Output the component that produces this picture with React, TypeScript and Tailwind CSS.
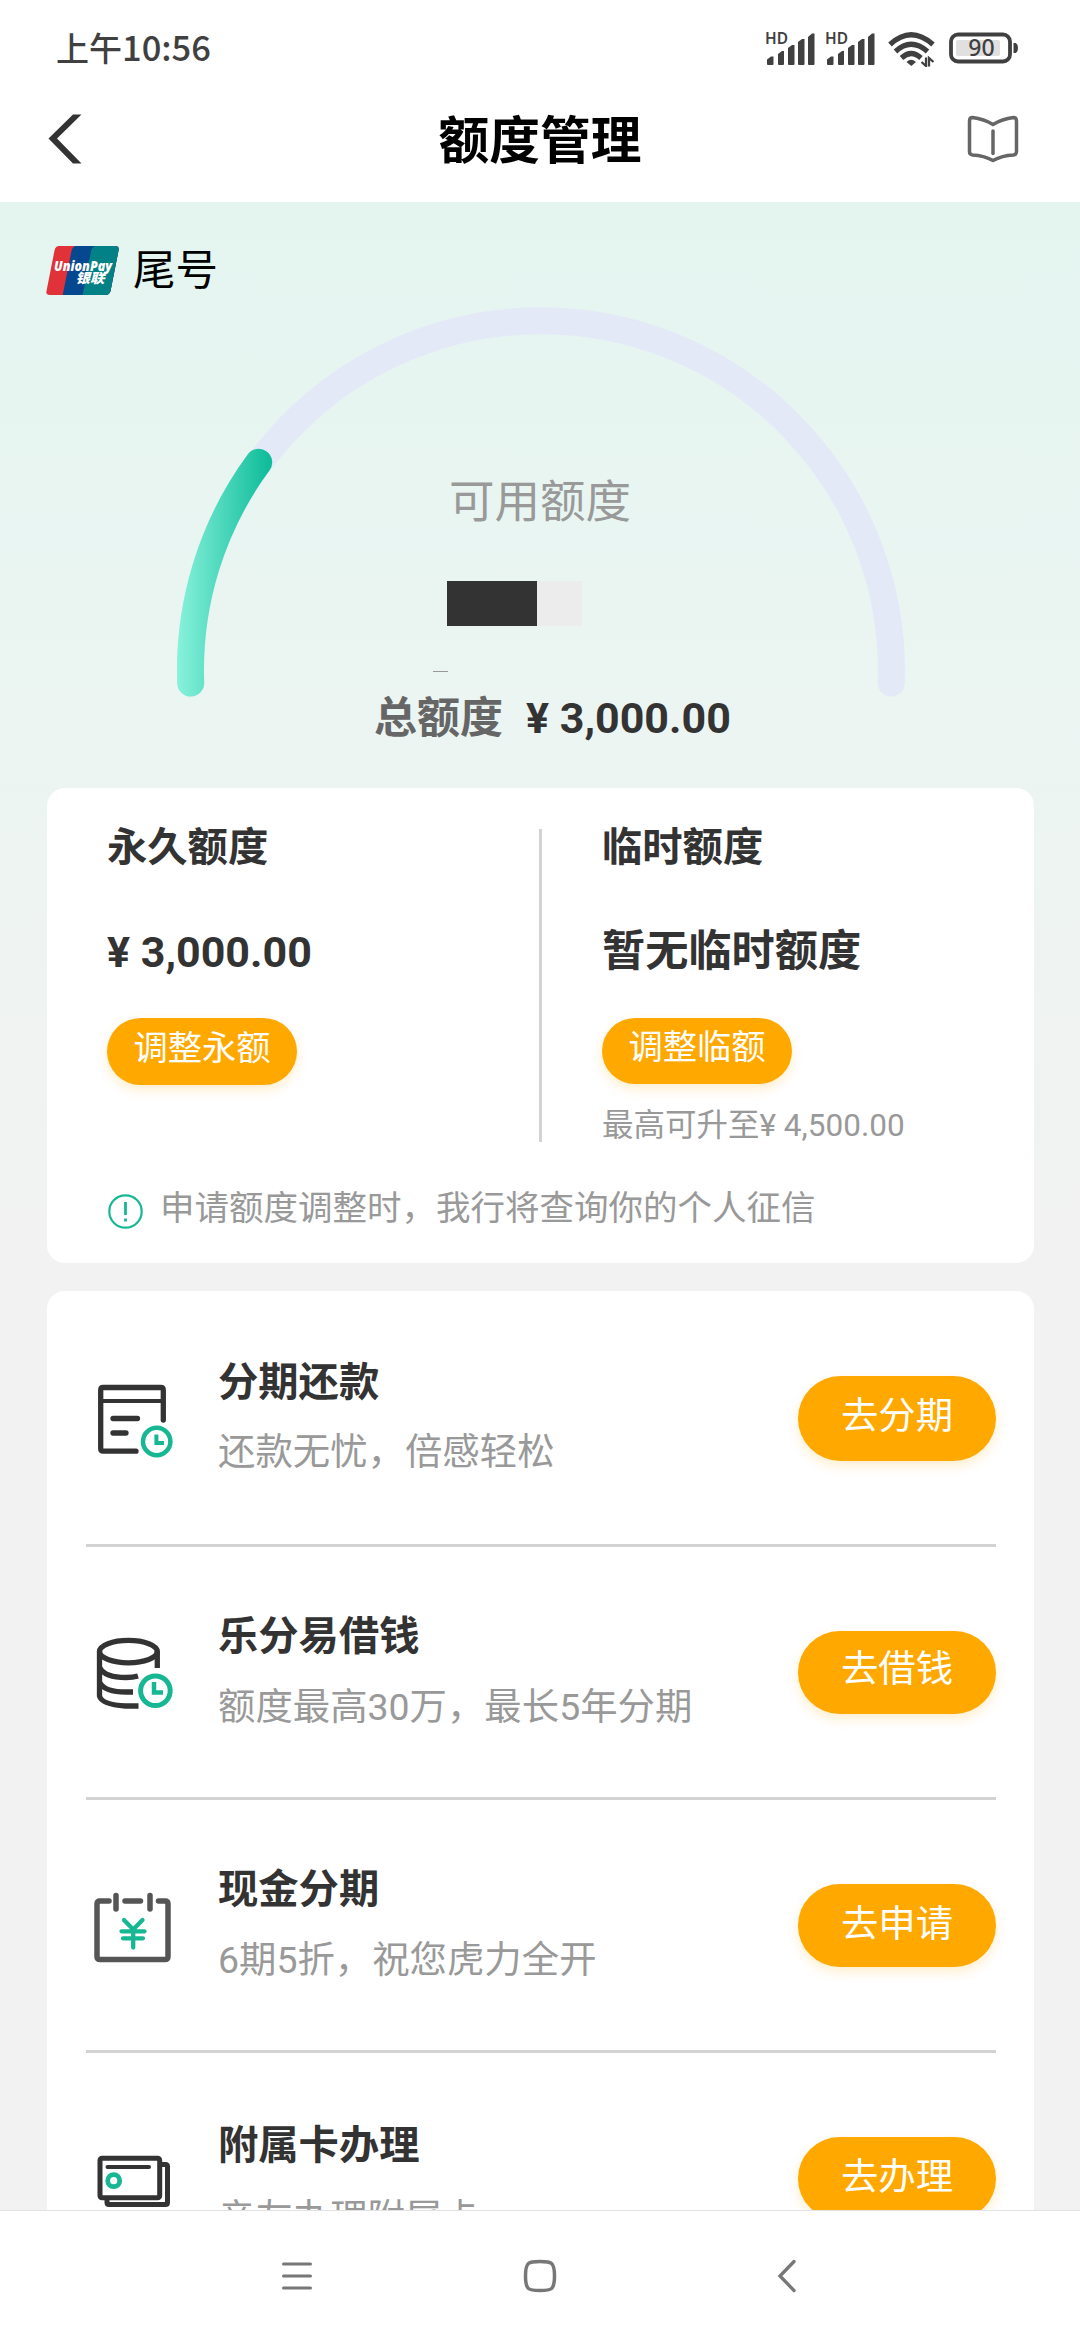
import React from 'react';

const DARK = '#333333';
const GREEN = '#17b794';

const SignalIcon = () => (
  <svg className="overflow-visible" width="52" height="36" viewBox="0 0 52 36" fill="#404040">
    <text x="0" y="13.500" fontSize="16.500" fontWeight="600" fontFamily="'Noto Sans', sans-serif" textLength="23" lengthAdjust="spacingAndGlyphs">
      HD
    </text>
    <path d="M2 34V29.500L6 26.500h2.500V34q0 1-1 1H3q-1 0-1-1z" />
    <path d="M13 24l4-3h2V34q0 1-1 1h-4q-1 0-1-1z" />
    <path d="M23 18l4-3h2.500V34q0 1-1 1H24q-1 0-1-1z" />
    <path d="M33 12l4-3h2.500V34q0 1-1 1H34q-1 0-1-1z" />
    <path d="M43 7l4-3.500h2.500V34q0 1-1 1H44q-1 0-1-1z" />
  </svg>
);

const WifiIcon = () => (
  <svg width="47" height="37" viewBox="0 0 47 37" fill="none" stroke="#404040" strokeWidth="5.200">
    <path d="M2 14.500Q23 -5 45 14.500" />
    <path d="M7.500 21.500Q23 7 39.500 21.500" />
    <path d="M13.500 28Q23 19 33 28" />
    <path d="M18.500 32Q23 27.500 28 32L23.300 36z" fill="#404040" stroke="none" />
    <path d="M38 27.500v8.500l-4.500-4M41 36.500V28l4.500 4" strokeWidth="2.300" />
  </svg>
);

const BatteryIcon = () => (
  <svg className="overflow-visible" width="69" height="32" viewBox="0 0 69 32">
    <rect x="2" y="2.500" width="59" height="27" rx="7" fill="none" stroke="#404040" strokeWidth="3.800" />
    <rect x="7" y="8" width="44" height="16" rx="2" fill="#e0e0e0" />
    <path d="M64.500 11h2q2.500 1 2.500 5t-2.500 5h-2z" fill="#404040" />
    <text x="32.500" y="24" textAnchor="middle" fontSize="23" fontWeight="500" fill="#404040" fontFamily="'Noto Sans', sans-serif">
      90
    </text>
  </svg>
);

const UnionPayLogo = () => (
  <svg width="73" height="50" viewBox="0 0 73 50">
    <defs>
      <clipPath id="cardShape">
        <path d="M13 0H69Q73.500 0 72.500 4.500L64.500 45Q63.500 49 59 49H4Q-.5 49 .5 45L8.500 4.500Q9.500 0 13 0z" />
      </clipPath>
    </defs>
    <g clipPath="url(#cardShape)">
      <rect width="73" height="50" fill="#e03238" />
      <path d="M30 0H73V50H16.500L25.500 5Q27 0 30 0z" fill="#05488f" />
      <path d="M50 0H73V50H36.500L45 5Q46.500 0 50 0z" fill="#028286" />
    </g>
    <g fill="#fff" fontStyle="italic" fontWeight="800">
      <text x="8" y="24.500" fontSize="14" textLength="58" lengthAdjust="spacingAndGlyphs" fontFamily="'Open Sans', sans-serif">
        UnionPay
      </text>
      <text x="29.500" y="37" fontSize="13.500" textLength="29" lengthAdjust="spacingAndGlyphs" fontFamily="'Noto Sans CJK SC', sans-serif">
        银联
      </text>
    </g>
  </svg>
);

const BillIcon = () => (
  <svg width="96" height="96" viewBox="0 0 96 96" fill="none" stroke={DARK} strokeWidth="5.300" strokeLinecap="round">
    <path d="M77.300 46V16q0-2.500-2.500-2.500H17.200q-2.500 0-2.500 2.500v58.700q0 2.500 2.500 2.500H50" />
    <path d="M15 27H77" strokeWidth="4" />
    <path d="M27 44.500H51.500M27 59H40" />
    <circle cx="70.700" cy="67.500" r="13.700" stroke={GREEN} strokeWidth="4.500" />
    <path d="M70.400 60.500V69H78" stroke={GREEN} strokeWidth="4" strokeLinecap="butt" />
  </svg>
);

const CoinsIcon = () => (
  <svg width="96" height="96" viewBox="0 0 96 96" fill="none" stroke={DARK} strokeWidth="5.300">
    <ellipse cx="42.400" cy="24.600" rx="28.900" ry="11.200" />
    <path d="M13.500 24V69q2 8.500 26 10h13" />
    <path d="M71.300 24V41" />
    <path d="M14 41q5 9.500 26 9.500 7 0 12-1.500" />
    <path d="M14 56q5 9 26 9h7" />
    <circle cx="69.400" cy="63.800" r="14.800" stroke={GREEN} strokeWidth="5" />
    <path d="M68 55V65.500H77" stroke={GREEN} strokeWidth="4.500" />
  </svg>
);

const CalendarIcon = () => (
  <svg width="96" height="96" viewBox="0 0 96 96" fill="none" stroke="#555" strokeWidth="5.500" strokeLinecap="round">
    <path d="M23 21H14q-3 0-3 3V76.500q0 3 3 3H79q3 0 3-3V24q0-3-3-3H72.500" />
    <path d="M39 21H54.500M30 15.500V29M64 15.500V29" />
    <path d="M38 40L47.200 49.500L56.500 40M35.500 51.300H58.500M37 58.300H57M47.200 50V67.500" stroke={GREEN} strokeWidth="4.300" />
  </svg>
);

const CardsIcon = () => (
  <svg width="96" height="96" viewBox="0 0 96 96" fill="none" stroke={DARK} strokeWidth="5" strokeLinecap="round">
    <rect x="14" y="25.200" width="59.700" height="39.500" rx="2" />
    <path d="M75.500 31.500H79.500q2 0 2 2V69.500q0 2-2 2H23q-2 0-2-2V67" />
    <path d="M21.500 34H63" strokeWidth="4" />
    <circle cx="27.700" cy="47.700" r="6" stroke={GREEN} strokeWidth="4.800" />
  </svg>
);

interface PillProps {
  label: string;
  className: string;
}

const Pill: React.FC<PillProps> = ({ label, className }) => (
  <button className={`flex items-center justify-center rounded-full bg-[#ffa800] text-white shadow-[0_5px_12px_rgba(255,168,0,0.2)] ${className}`}>
    {label}
  </button>
);

const services = [
  { title: '分期还款', desc: '还款无忧，倍感轻松', action: '去分期', Icon: BillIcon, textClass: 'pt-16 gap-[19px]', pillClass: 'mt-[82px] h-[85px] pb-1' },
  { title: '乐分易借钱', desc: '额度最高30万，最长5年分期', action: '去借钱', Icon: CoinsIcon, textClass: 'pt-[65px] gap-5', pillClass: 'mt-[84px] h-[83px] pb-1.5' },
  { title: '现金分期', desc: '6期5折，祝您虎力全开', action: '去申请', Icon: CalendarIcon, textClass: 'pt-[65px] gap-5', pillClass: 'mt-[84px] h-[83px] pb-[3px]' },
  { title: '附属卡办理', desc: '亲友办理附属卡', action: '去办理', Icon: CardsIcon, textClass: 'pt-[68px] gap-[22px]', pillClass: 'mt-[84px] h-[83px] pb-[3px]' },
];

const App: React.FC = () => {
  return (
    <div className="flex h-[2340px] w-[1080px] flex-col overflow-hidden bg-white text-[#333] [font-family:Roboto,'Noto_Sans_CJK_SC',sans-serif]">
      {/* Status bar */}
      <div className="flex h-[76px] shrink-0 items-center justify-between pt-5 pr-[62px] pl-14 text-[#404040]">
        <div className="flex items-baseline pb-[3px] font-medium [font-family:'Noto_Sans_CJK_SC',sans-serif]">
          <span className="text-[33px] leading-[40px]">上午</span>
          <span className="text-[34.500px] leading-[40px]">10:56</span>
        </div>
        <div className="flex items-center">
          <SignalIcon />
          <div className="ml-2">
            <SignalIcon />
          </div>
          <div className="ml-[11px]">
            <WifiIcon />
          </div>
          <div className="ml-[14px]">
            <BatteryIcon />
          </div>
        </div>
      </div>

      {/* Title bar */}
      <header className="flex h-[126px] shrink-0 items-center justify-between pr-[61px] pl-12">
        <svg width="34" height="50" viewBox="0 0 34 50" fill="#333">
          <path d="M25 0.500H33.500L9 24.500L33.500 49.500H25L0.500 24.500z" />
        </svg>
        <h1 className="pt-[5px] pl-[31px] text-[50.700px] leading-[60px] font-bold text-black">额度管理</h1>
        <svg width="52" height="48" viewBox="0 0 52 48" fill="none" stroke="#666" strokeWidth="3.500" strokeLinecap="round" strokeLinejoin="round">
          <path d="M26 9.500Q17 4 5.500 2.500Q2.500 2.500 2.500 6V36.500Q2.500 39.500 5.500 40Q17 40.500 26 45.500Q35 40.500 46.500 40Q49.500 39.500 49.500 36.500V6Q49.500 2.500 46.500 2.500Q35 4 26 9.500z" />
          <path d="M26 16V38.500" />
        </svg>
      </header>

      <main className="flex h-[2008px] shrink-0 flex-col overflow-hidden bg-[linear-gradient(180deg,#e4f5f0_0px,#ebf5f2_480px,#f2f2f2_1030px)]">
        <div className="mt-11 flex h-[50px] shrink-0 items-center gap-[14px] pl-[46px]">
          <UnionPayLogo />
          <span className="text-[42.500px] leading-[50px] text-black">尾号</span>
        </div>

        {/* Quota gauge */}
        <section className="relative flex h-[492px] shrink-0 flex-col">
          <svg className="absolute inset-0" width="1080" height="492" viewBox="0 0 1080 492" fill="none" strokeWidth="27" strokeLinecap="round">
            <defs>
              <linearGradient id="usedQuota" gradientUnits="userSpaceOnUse" x1="177" y1="0" x2="268" y2="0">
                <stop offset="0" stopColor="#89f2dc" />
                <stop offset="1" stopColor="#10bd9b" />
              </linearGradient>
            </defs>
            <path d="M190.700 387A350.500 350.500 0 1 1 891.300 387" stroke="#e4e9f8" />
            <path d="M190.700 387A350.500 350.500 0 0 1 258.700 166.300" stroke="url(#usedQuota)" />
          </svg>
          <div className="relative mt-[177px] text-center text-[45.500px] leading-[60px] text-[#999]">可用额度</div>
          <div className="relative mt-12 flex h-[45px] pl-[447px]">
            <div className="w-[90px] bg-[#333]" />
            <div className="w-[45px] bg-[#ececec]" />
          </div>
          <div className="mt-[45px] ml-[433px] h-px w-[15px] bg-[#999]" />
          <div className="relative mt-[21px] flex pl-[374px] text-[43px] leading-[50px] font-bold">
            <span className="text-[#666]">总额度</span>
            <span className="ml-[23px]">¥ 3,000.00</span>
          </div>
        </section>

        <section className="mr-[46px] ml-[47px] h-[475px] shrink-0 rounded-[18px] bg-white pt-9 pr-5 pl-[60px]">
          <div className="flex h-[322px]">
            <div className="flex w-[432px] flex-col items-start">
              <h2 className="text-[40.300px] leading-[48px] font-bold">永久额度</h2>
              <p className="mt-[55px] text-[43px] leading-[50px] font-bold">¥ 3,000.00</p>
              <Pill label="调整永额" className="mt-[41px] h-[67px] w-[190px] pb-1.5 text-[34.300px]" />
            </div>
            <div className="mt-[5px] h-[313px] w-[3px] bg-[#d3d3d3]" />
            <div className="flex flex-col items-start pl-[60px]">
              <h2 className="text-[40.300px] leading-[48px] font-bold">临时额度</h2>
              <p className="mt-[55px] text-[43.200px] leading-[50px] font-bold">暂无临时额度</p>
              <Pill label="调整临额" className="mt-[41px] h-[67px] w-[190px] pb-1.5 text-[34.300px]" />
              <p className="mt-[22px] text-[31.500px] leading-[40px] text-[#999]">最高可升至¥ 4,500.00</p>
            </div>
          </div>
          <div className="mt-[42px] flex items-start gap-[17px] text-[34.500px] leading-[40px] text-[#999]">
            <svg className="mt-[6px] ml-px" width="35" height="35" viewBox="0 0 35 35" fill="none" stroke={GREEN} strokeWidth="2.200">
              <circle cx="17.500" cy="17.500" r="16.200" />
              <path d="M17.500 8V21M17.500 24.500V27.500" strokeWidth="2.800" />
            </svg>
            <span>申请额度调整时，我行将查询你的个人征信</span>
          </div>
        </section>

        <section className="mt-7 mr-[46px] ml-[47px] shrink-0 rounded-t-[18px] bg-white pt-[3px] pr-[38px] pl-[39px]">
          {services.map(({ title, desc, action, Icon, textClass, pillClass }) => (
            <div key={title} className="flex h-[253px] items-start border-b-3 border-[#d3d3d3]">
              <div className="mt-20">
                <Icon />
              </div>
              <div className={`ml-9 flex flex-1 flex-col ${textClass}`}>
                <h3 className="text-[40.300px] leading-[50px] font-bold">{title}</h3>
                <p className="text-[37.400px] leading-[50px] text-[#999]">{desc}</p>
              </div>
              <Pill label={action} className={`w-[198px] text-[37.400px] ${pillClass}`} />
            </div>
          ))}
        </section>
      </main>

      {/* System navigation */}
      <nav className="flex h-[130px] shrink-0 items-center justify-between border-t border-[#e3e3e3] pr-[283px] pl-[281px]">
        <svg width="32" height="32" viewBox="0 0 32 32" stroke="#777" strokeWidth="3" strokeLinecap="round">
          <path d="M2.500 4H29.500M2.500 16H29.500M2.500 28H29.500" />
        </svg>
        <svg className="mr-[10px]" width="34" height="34" viewBox="0 0 34 34" fill="none" stroke="#777" strokeWidth="3.500">
          <path d="M17 2.500C28.500 2.500 31.500 3 31.500 17S28.500 31.500 17 31.500S2.500 31 2.500 17S5.500 2.500 17 2.500z" />
        </svg>
        <svg width="20" height="34" viewBox="0 0 20 34" fill="none" stroke="#777" strokeWidth="3.300" strokeLinecap="round">
          <path d="M17 2.500L3 17L17 31.500" />
        </svg>
      </nav>
    </div>
  );
};

export default App;
